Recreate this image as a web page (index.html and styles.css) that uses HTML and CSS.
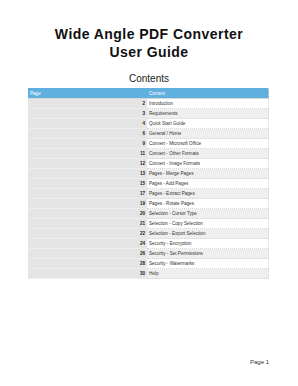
FILE: index.html
```html
<!DOCTYPE html>
<html lang="en">
<head>
  <meta charset="UTF-8">
  <meta name="viewport" content="width=device-width, initial-scale=1.0">
  <title>Wide Angle PDF Converter User Guide</title>
  <link rel="stylesheet" href="styles.css">
</head>
<body>
  <div class="pagina">
    <h1 class="titulo">Wide Angle PDF Converter<br>User Guide</h1>
    <h2 class="subtitulo">Contents</h2>

    <table class="indice">
      <thead>
        <tr>
          <th class="col-pagina">Page</th>
          <th class="col-contenido">Content</th>
        </tr>
      </thead>
      <tbody>
        <tr><td class="num">2</td><td>Introduction</td></tr>
        <tr><td class="num">3</td><td>Requirements</td></tr>
        <tr><td class="num">4</td><td>Quick Start Guide</td></tr>
        <tr><td class="num">6</td><td>General / Home</td></tr>
        <tr><td class="num">9</td><td>Convert - Microsoft Office</td></tr>
        <tr><td class="num">11</td><td>Convert - Other Formats</td></tr>
        <tr><td class="num">12</td><td>Convert - Image Formats</td></tr>
        <tr><td class="num">13</td><td>Pages - Merge Pages</td></tr>
        <tr><td class="num">15</td><td>Pages - Add Pages</td></tr>
        <tr><td class="num">17</td><td>Pages - Extract Pages</td></tr>
        <tr><td class="num">19</td><td>Pages - Rotate Pages</td></tr>
        <tr><td class="num">20</td><td>Selection - Cursor Type</td></tr>
        <tr><td class="num">21</td><td>Selection - Copy Selection</td></tr>
        <tr><td class="num">22</td><td>Selection - Export Selection</td></tr>
        <tr><td class="num">24</td><td>Security - Encryption</td></tr>
        <tr><td class="num">26</td><td>Security - Set Permissions</td></tr>
        <tr><td class="num">28</td><td>Security - Watermarks</td></tr>
        <tr><td class="num">30</td><td>Help</td></tr>
      </tbody>
    </table>

    <div class="pie">Page 1</div>
  </div>
</body>
</html>
```

FILE: styles.css
```css
body {
  margin: 0;
  background-color: #ffffff;
  font-family: "Liberation Sans", Arial, sans-serif;
  color: #111;
}

.pagina {
  width: 298px;
  height: 386px;
  padding-top: 25px;
  box-sizing: border-box;
  position: relative;
}

.titulo {
  margin: 0;
  text-align: center;
  font-size: 14px;
  letter-spacing: 0.45px;
  line-height: 18px;
  font-weight: bold;
  color: #111;
}

.subtitulo {
  margin: 12px 0 3px 0;
  text-align: center;
  font-size: 10px;
  line-height: 12px;
  font-weight: normal;
  color: #222;
}

.indice {
  margin-left: 28px;
  width: 241px;
  border-collapse: collapse;
  font-size: 4.6px;
  border-right: 1px dotted #d8d8d8;
}

.indice th {
  background-color: #5fb0de;
  color: #fff;
  font-weight: normal;
  text-align: left;
  height: 10px;
  padding: 0 2px;
  border-bottom: 1px solid #d9d9d9;
}

.col-pagina {
  width: 115px;
}

.indice td {
  height: 9px;
  padding: 0 2px;
  color: #333;
  border-bottom: 1px dotted #d6d6d6;
}

.indice td.num {
  background-color: #e5e5e5;
  text-align: right;
  font-weight: bold;
  color: #222;
  border-bottom: 1px solid #ededed;
}

.indice tbody tr:nth-child(even) td:last-child {
  background-color: #efefef;
}

.pie {
  position: absolute;
  right: 29px;
  top: 359px;
  font-size: 6px;
  color: #333;
}
```
